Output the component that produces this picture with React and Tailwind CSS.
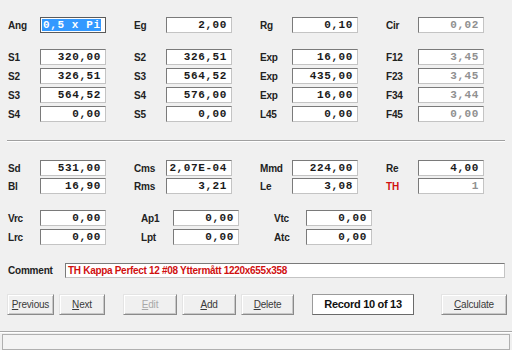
import React from "react";

const sans = "font-['Liberation_Sans',Arial,sans-serif]";
const mono = "font-['Liberation_Mono','Courier_New',monospace]";

const rows1 = [
  [
    ["S1", "320,00"],
    ["S2", "326,51"],
    ["Exp", "16,00"],
    ["F12", "3,45", true],
  ],
  [
    ["S2", "326,51"],
    ["S3", "564,52"],
    ["Exp", "435,00"],
    ["F23", "3,45", true],
  ],
  [
    ["S3", "564,52"],
    ["S4", "576,00"],
    ["Exp", "16,00"],
    ["F34", "3,44", true],
  ],
  [
    ["S4", "0,00"],
    ["S5", "0,00"],
    ["L45", "0,00"],
    ["F45", "0,00", true],
  ],
];

const rows2 = [
  [
    ["Sd", "531,00"],
    ["Cms", "2,07E-04"],
    ["Mmd", "224,00"],
    ["Re", "4,00"],
  ],
  [
    ["Bl", "16,90"],
    ["Rms", "3,21"],
    ["Le", "3,08"],
    ["TH", "1", true, true],
  ],
];

const rows3 = [
  [
    ["Vrc", "0,00"],
    ["Ap1", "0,00"],
    ["Vtc", "0,00"],
  ],
  [
    ["Lrc", "0,00"],
    ["Lpt", "0,00"],
    ["Atc", "0,00"],
  ],
];

const Field = ({ value, gray }) => (
  <div
    className={`h-[16px] w-[66px] bg-white border border-t-[#7a7a7a] border-l-[#7a7a7a] border-r-[#c4c4c4] border-b-[#c4c4c4] flex items-center justify-end pr-[4px] text-[11px] font-bold tracking-[0.6px] leading-none ${mono} ${
      gray ? "text-[#909090]" : "text-[#1a1a1a]"
    }`}
  >
    {value}
  </div>
);

const Cell = ({ label, value, gray, red }) => (
  <div className="w-[133px] flex items-center">
    <span
      className={`w-[32px] text-[10px] font-bold tracking-[-0.2px] ${sans} ${
        red ? "text-[#d01010]" : "text-[#222]"
      }`}
    >
      {label}
    </span>
    <Field value={value} gray={gray} />
  </div>
);

const Row = ({ cells }) => (
  <div className="flex h-[16px]">
    {cells.map(([label, value, gray, red], i) => (
      <Cell key={i} label={label} value={value} gray={gray} red={red} />
    ))}
  </div>
);

const Button = ({ children, width, disabled }) => (
  <div
    className={`h-[21px] ${width} flex items-center justify-center bg-[#f0f0f0] border border-t-[#e4e4e4] border-l-[#e4e4e4] border-r-[#8a8a8a] border-b-[#8a8a8a] shadow-[inset_1px_1px_0_#fff,inset_-1px_-1px_0_#c8c8c8] text-[10px] tracking-[-0.2px] ${sans} ${
      disabled ? "text-[#a8a8a8]" : "text-[#3a3a3a]"
    }`}
  >
    {children}
  </div>
);

export default function App() {
  return (
    <div className="w-[512px] h-[350px] bg-[#f0f0f0] overflow-hidden flex flex-col">
      <div className="pl-[8px] pt-[17px] flex flex-col">
        <div className="flex h-[16px]">
          <div className="w-[133px] flex items-center">
            <span className={`w-[32px] text-[10px] font-bold tracking-[-0.2px] text-[#222] ${sans}`}>
              Ang
            </span>
            <div
              className={`h-[16px] w-[66px] bg-white border border-[#5a5a5a] flex items-center pl-[1px] text-[11px] font-bold tracking-[0.6px] leading-none ${mono}`}
            >
              <span className="bg-[#3399ff] text-white pl-[1px] h-[12px] flex items-center">
                0,5 x Pi
              </span>
            </div>
          </div>
          <Cell label="Eg" value="2,00" />
          <Cell label="Rg" value="0,10" />
          <Cell label="Cir" value="0,02" gray />
        </div>

        <div className="mt-[16px] flex flex-col gap-[3px]">
          {rows1.map((r, i) => (
            <Row key={i} cells={r} />
          ))}
        </div>

        <div className="mt-[18px] mr-[7px] -ml-[1px] h-[1px] bg-[#a0a0a0] shadow-[0_1px_0_#fff]" />

        <div className="mt-[19px] flex flex-col gap-[2px]">
          {rows2.map((r, i) => (
            <Row key={i} cells={r} />
          ))}
        </div>

        <div className="mt-[16px] flex flex-col gap-[3px]">
          {rows3.map((r, i) => (
            <Row key={i} cells={r} />
          ))}
        </div>

        <div className="mt-[18px] flex items-center h-[15px] pr-[7px]">
          <span className={`w-[57px] text-[10px] font-bold tracking-[-0.2px] text-[#222] ${sans}`}>
            Comment
          </span>
          <div
            className={`flex-1 h-[15px] bg-white border border-t-[#7a7a7a] border-l-[#7a7a7a] border-r-[#c4c4c4] border-b-[#c4c4c4] flex items-center pl-[2px] text-[10px] font-bold tracking-[-0.3px] text-[#d01010] ${sans}`}
          >
            TH Kappa Perfect 12 #08 Yttermått 1220x655x358
          </div>
        </div>

        <div className="mt-[16px] -ml-[1px] flex items-center">
          <Button width="w-[47px]">
            <span>
              <u>P</u>revious
            </span>
          </Button>
          <div className="w-[5px]" />
          <Button width="w-[46px]">
            <span>
              <u>N</u>ext
            </span>
          </Button>
          <div className="w-[18px]" />
          <Button width="w-[54px]" disabled>
            <span>
              <u>E</u>dit
            </span>
          </Button>
          <div className="w-[5px]" />
          <Button width="w-[54px]">
            <span>
              <u>A</u>dd
            </span>
          </Button>
          <div className="w-[5px]" />
          <Button width="w-[53px]">
            <span>
              <u>D</u>elete
            </span>
          </Button>
          <div className="w-[18px]" />
          <div
            className={`h-[21px] w-[102px] bg-white border border-t-[#9a9a9a] border-l-[#9a9a9a] border-r-[#6a6a6a] border-b-[#6a6a6a] flex items-center justify-center text-[11px] font-bold tracking-[-0.3px] text-[#111] ${sans}`}
          >
            Record 10 of 13
          </div>
          <div className="w-[27px]" />
          <Button width="w-[66px]">
            <span>
              <u>C</u>alculate
            </span>
          </Button>
        </div>
      </div>

      <div className="mt-[16px] border-t border-[#a8a8a8] shadow-[inset_0_1px_0_#fff] pt-[2px] px-[2px] flex-1">
        <div className="h-full border border-[#b0b0b0] bg-[#f4f4f4]" />
      </div>
    </div>
  );
}
